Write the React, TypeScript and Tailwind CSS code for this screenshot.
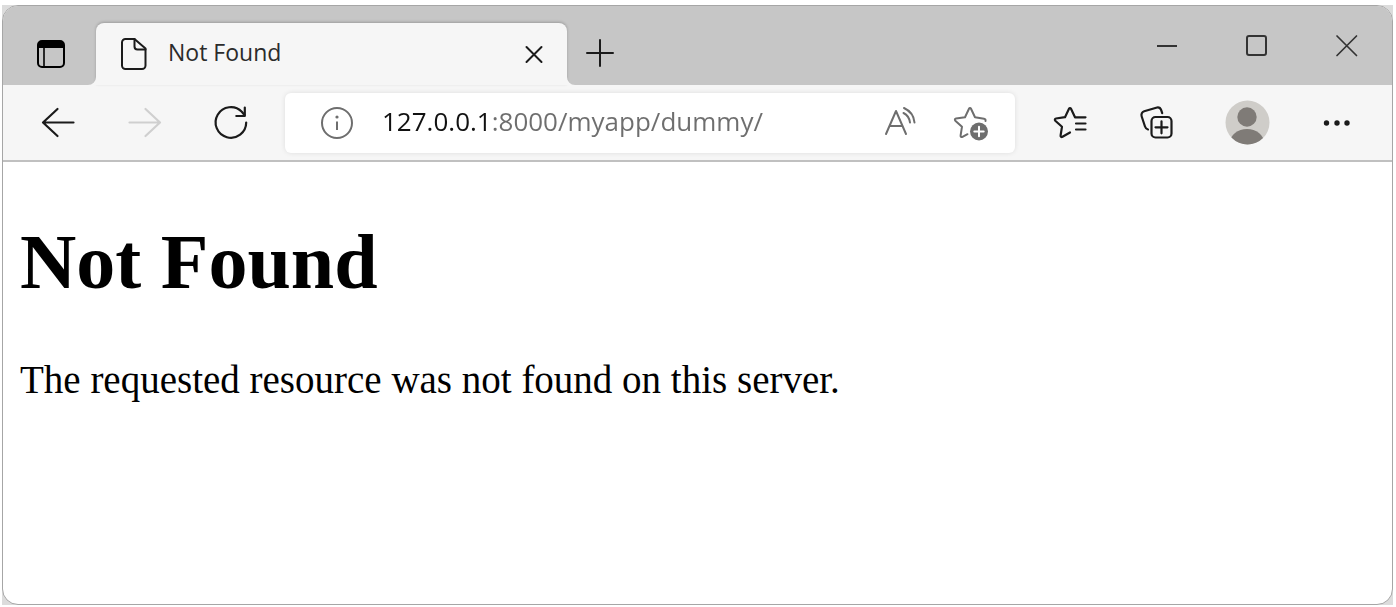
import { useState } from "react";
import type { ReactNode } from "react";

type IconProps = { size?: number; stroke?: number; className?: string; children: ReactNode };

function Icon({ size = 36, stroke = 2, className, children }: IconProps) {
  return (
    <svg
      width={size}
      height={size}
      viewBox={`0 0 ${size} ${size}`}
      fill="none"
      stroke="currentColor"
      strokeWidth={stroke}
      strokeLinecap="round"
      strokeLinejoin="round"
      className={className}
      aria-hidden="true"
    >
      {children}
    </svg>
  );
}

type ButtonProps = { label: string; className: string; disabled?: boolean; children: ReactNode };

function IconButton({ label, className, disabled, children }: ButtonProps) {
  return (
    <button
      type="button"
      aria-label={label}
      disabled={disabled}
      className={`flex shrink-0 items-center justify-center ${className}`}
    >
      {children}
    </button>
  );
}

function TabCurve({ className }: { className: string }) {
  return (
    <svg width="8" height="8" viewBox="0 0 8 8" className={className} aria-hidden="true">
      <path d="M8 0v8H0a8 8 0 0 0 8-8z" fill="#f6f6f6" />
    </svg>
  );
}

function TitleBar() {
  return (
    <header className="flex h-[79px] items-end bg-[#c6c6c6]">
      <IconButton label="Tab actions menu" className="h-[62px] w-[93px] text-black">
        <Icon size={32}>
          <rect x="4" y="3" width="26" height="26" rx="4" />
          <path d="M4 10V7a4 4 0 0 1 4-4h18a4 4 0 0 1 4 4v3z" fill="currentColor" stroke="none" />
          <path d="M4 9h26M10 10v19" strokeWidth="1.6" />
        </Icon>
      </IconButton>
      <div className="relative flex h-[62px] w-[471px] items-center rounded-t-lg bg-[#f6f6f6] pr-[17px] pl-5 shadow-[0_-1px_3px_rgba(0,0,0,0.22)]">
        <TabCurve className="absolute bottom-0 -left-2" />
        <TabCurve className="absolute -right-2 bottom-0 -scale-x-100" />
        <Icon className="mr-4 text-[#1b1b1b]">
          <path d="M9.500 3H18.500L29.500 12.500V29.500a3.500 3.500 0 0 1-3.500 3.500H9.500A3.500 3.500 0 0 1 6 29.500V6.500A3.500 3.500 0 0 1 9.500 3z" />
          <path d="M18.500 3v7.500a3 3 0 0 0 3 3h8" />
        </Icon>
        <span className="flex-1 pb-1 font-['Open_Sans',sans-serif] text-[23px] leading-8 text-[#2b2b2b]">
          Not Found
        </span>
        <IconButton label="Close tab" className="size-8 text-[#1b1b1b]">
          <Icon size={20}>
            <path d="M2.500 3l15 15M17.500 3l-15 15" />
          </Icon>
        </IconButton>
      </div>
      <IconButton label="New tab" className="h-16 w-[66px] text-[#1b1b1b]">
        <Icon size={28}>
          <path d="M14 1v26M1 14h26" />
        </Icon>
      </IconButton>
      <div className="ml-auto flex self-stretch text-[#333]">
        <IconButton label="Minimize" className="w-[90px]">
          <Icon size={24}>
            <path d="M2 12h20" strokeLinecap="butt" />
          </Icon>
        </IconButton>
        <IconButton label="Maximize" className="w-[90px]">
          <Icon size={24}>
            <rect x="2" y="2" width="19" height="19" rx="2" />
          </Icon>
        </IconButton>
        <IconButton label="Close window" className="w-[90px]">
          <Icon size={24} stroke={1.7}>
            <path d="M2 2l19.500 19.500M21.500 2l-19.500 19.500" />
          </Icon>
        </IconButton>
      </div>
    </header>
  );
}

function AddressBar() {
  const [address, setAddress] = useState("127.0.0.1:8000/myapp/dummy/");
  return (
    <form
      className="mr-[10px] ml-3 flex h-[60px] min-w-0 flex-1 items-center rounded-md bg-white pr-[10px] pl-[34px] text-[#6e6e6e] shadow-[0_0_5px_rgba(0,0,0,0.1)]"
      onSubmit={(event) => event.preventDefault()}
    >
      <IconButton label="View site information" className="mr-[27px]">
        <Icon>
          <circle cx="18" cy="18" r="15" />
          <path d="M18 16.500v8.500" strokeLinecap="butt" />
          <circle cx="18" cy="12" r="1.600" fill="currentColor" stroke="none" />
        </Icon>
      </IconButton>
      <input
        type="text"
        aria-label="Address"
        value={address}
        onChange={(event) => setAddress(event.target.value)}
        className="min-w-0 flex-1 bg-[linear-gradient(to_right,#111_108px,#6e6e6e_108px)] bg-clip-text pb-1 font-['Open_Sans',sans-serif] text-[26px] leading-9 text-transparent caret-black outline-none"
      />
      <IconButton label="Read aloud" className="w-[70px]">
        <Icon>
          <path d="M4 29L14 6l10 23M7.500 21h13" />
          <path d="M21.500 8c4 2 6 5.500 6.500 9.500M22 3c6.500 3 10 8.500 10.500 14.500" />
        </Icon>
      </IconButton>
      <IconButton label="Add this page to favorites" className="w-[70px]">
        <Icon>
          <path d="M33.500 16c.3-1.500-.4-2.100-1.500-2.300l-9-1.500-4-8.400c-.5-1-1.500-1-2 0l-4 8.400-9 1.300c-1.200.2-1.500 1.300-.7 2.200l6.700 6-1.400 8.800c-.2 1.300.8 1.900 1.900 1.300l5-2.600" />
          <circle cx="27" cy="26.500" r="9" fill="currentColor" stroke="none" />
          <path d="M27 21.800v9.400M22.300 26.500h9.400" stroke="#fff" />
        </Icon>
      </IconButton>
    </form>
  );
}

function Toolbar() {
  return (
    <nav
      aria-label="Browser toolbar"
      className="flex h-[77px] items-center border-b-2 border-[#c0c0c0] bg-[#f6f6f6] pr-[11px] pl-3 text-[#1b1b1b]"
    >
      <IconButton label="Back" className="w-[86px]">
        <Icon stroke={2.2}>
          <path d="M33.500 17.500H3.500M17.500 4L3 17.500 17.500 31" />
        </Icon>
      </IconButton>
      <IconButton label="Forward" className="w-[86px] text-[#cfcfcf]" disabled>
        <Icon stroke={2.2}>
          <path d="M3.500 17.500H33.500M19.500 4L34 17.500 19.500 31" />
        </Icon>
      </IconButton>
      <IconButton label="Refresh" className="w-[86px]">
        <Icon size={40} stroke={2.2}>
          <path d="M36.200 19.500A15.300 15.300 0 1 1 31.800 8.700L34.500 12" />
          <path d="M34.800 4.500v8.500h-8.500" />
        </Icon>
      </IconButton>
      <AddressBar />
      <IconButton label="Favorites" className="w-[89px]">
        <Icon stroke={2.2}>
          <path d="M33.500 12.300H23l-4-8.500c-.5-1-1.500-1-2 0l-4 8.400-9 1.300c-1.200.2-1.500 1.300-.7 2.200l6.700 6-1.400 8.800c-.2 1.300.8 1.900 1.900 1.300l7.500-4.300M24 18.500h9.500M24 24.500h9.500" />
        </Icon>
      </IconButton>
      <IconButton label="Collections" className="w-[89px]">
        <Icon size={40} stroke={2.2}>
          <path d="M9 26.500C7 26 6.500 25 6 23.500L2.700 13.500c-.8-2.500.3-4.500 2.500-5.200l12-3.600c2.500-.7 4.200.3 5 2.500l1 3" />
          <rect x="12.500" y="14" width="20" height="20.500" rx="4" />
          <path d="M22.500 18.300v12M16.500 24.300h12" />
        </Icon>
      </IconButton>
      <IconButton label="Profile" className="w-[89px]">
        <svg width="46" height="46" viewBox="0 0 46 46" aria-hidden="true">
          <defs>
            <clipPath id="avatar">
              <circle cx="22.500" cy="22.500" r="22" />
            </clipPath>
          </defs>
          <circle cx="22.500" cy="22.500" r="22" fill="#cfcdc9" />
          <circle cx="22" cy="17" r="9.700" fill="#7f7b77" />
          <ellipse cx="22" cy="43" rx="17" ry="14" fill="#7f7b77" clipPath="url(#avatar)" />
        </svg>
      </IconButton>
      <IconButton label="Settings and more" className="w-[89px]">
        <Icon>
          <g fill="currentColor" stroke="none">
            <circle cx="7.500" cy="18" r="2.700" />
            <circle cx="18" cy="18" r="2.700" />
            <circle cx="28" cy="18" r="2.700" />
          </g>
        </Icon>
      </IconButton>
    </nav>
  );
}

export default function App() {
  return (
    <div className="flex min-h-screen flex-col bg-white pt-[5px] pr-[3px] pb-[2px] pl-[2px]">
      <div className="flex flex-1 flex-col bg-[#dcdcdc]">
        <div className="flex flex-1 flex-col overflow-hidden rounded-2xl border border-[#a6a6a6] bg-white">
          <TitleBar />
          <Toolbar />
          <main className="px-[17px] pt-14 font-['Liberation_Serif',serif] text-black">
            <h1 className="text-[78px] leading-[88px] font-bold">Not Found</h1>
            <p className="mt-[52px] text-[39px] leading-[44px]">
              The requested resource was not found on this server.
            </p>
          </main>
        </div>
      </div>
    </div>
  );
}
